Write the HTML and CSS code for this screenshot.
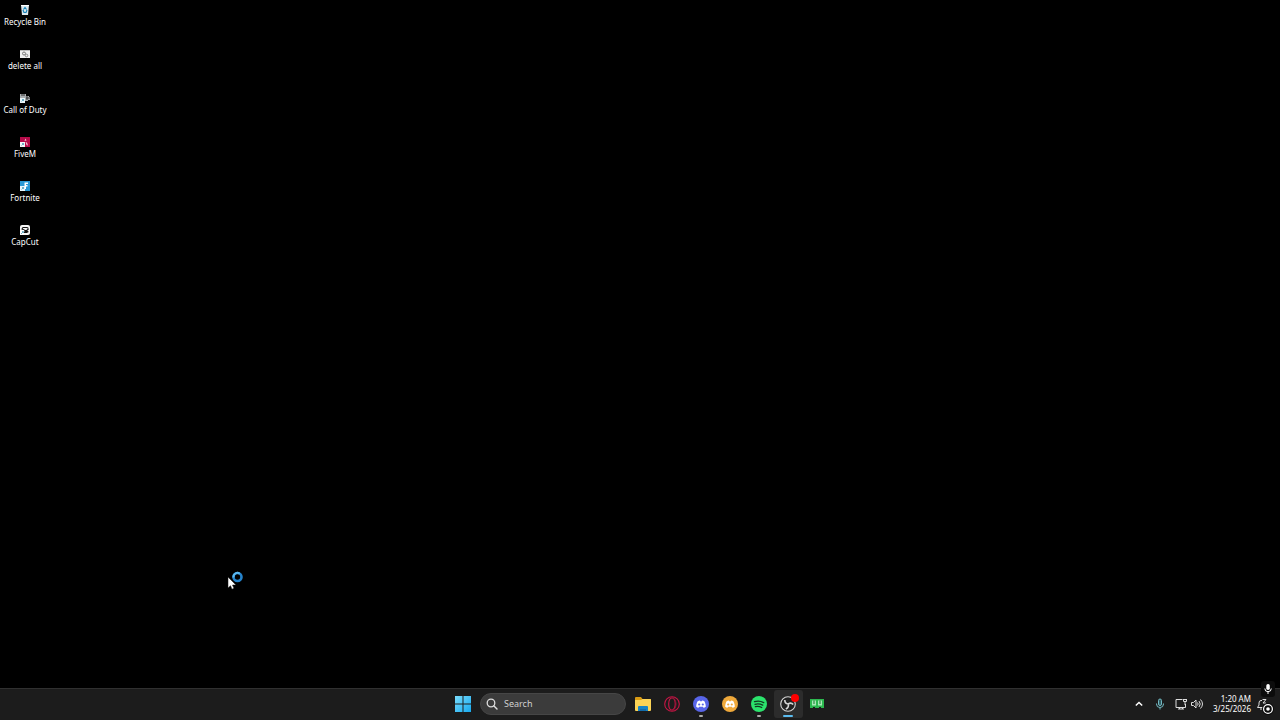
FILE: index.html
```html
<!DOCTYPE html>
<html lang="en">
<head>
  <meta charset="UTF-8">
  <meta name="viewport" content="width=device-width, initial-scale=1.0">
  <title>Desktop</title>
  <link rel="stylesheet" href="styles.css">
</head>
<body>
  <main class="desktop">
    <button class="shortcut">
      <svg viewBox="0 0 12 12"><path d="M2 1h8L9 11H3z" fill="#d9e6eb"/><path d="M2 1h8v1H2z" fill="#fff"/><path d="M4.500 5.500l1.500-2 1.500 2M8 6l-1 2.500H5L4 6" fill="none" stroke="#1683b8" stroke-width="1.200"/></svg>
      <span>Recycle Bin</span>
    </button>
    <button class="shortcut">
      <svg viewBox="0 0 12 12"><path d="M1 2h10v8H1z" fill="#eee"/><path d="M1 2h10v1H1z" fill="#bbb"/><circle cx="5" cy="5.500" r="1.500" fill="none" stroke="#777"/><circle cx="7.500" cy="7.500" r="1.300" fill="none" stroke="#888"/></svg>
      <span>delete all</span>
    </button>
    <button class="shortcut">
      <svg viewBox="0 0 12 12"><path d="M1 2h6v2h3v1h1v3H9v1H1z" fill="#a9adaf"/><path d="M2 3h4M7 6h4M8 4v4" stroke="#333"/><path d="M1 6h5v5H1z" fill="#e9f5f8"/><path d="M2.500 9.500l2-2M3 7.500h1.500V9" fill="none" stroke="#4a9bb8" stroke-width=".8"/></svg>
      <span>Call of Duty</span>
    </button>
    <button class="shortcut">
      <svg viewBox="0 0 12 12"><path d="M1 1h10v10H1z" fill="#b50b49"/><path d="M5.500 5l1-2.500 1 2zM6.500 6l1.500.5 1 3-1.500-.5z" fill="#f3bfd0"/><path d="M1 6h5v5H1z" fill="#f4f6f8"/><path d="M2.500 9.500l2-2M3 7.500h1.500V9" fill="none" stroke="#4a9bb8" stroke-width=".8"/></svg>
      <span>FiveM</span>
    </button>
    <button class="shortcut">
      <svg viewBox="0 0 12 12"><path d="M1 1h10v10H1z" fill="#2898d5"/><path d="M5.500 2.500H9V4H7v1h1.500v1.500H7V9H5.500z" fill="#fff"/><path d="M1 6h5v5H1z" fill="#e8f5fb"/><path d="M2.500 9.500l2-2M3 7.500h1.500V9" fill="none" stroke="#4a9bb8" stroke-width=".8"/></svg>
      <span>Fortnite</span>
    </button>
    <button class="shortcut">
      <svg viewBox="0 0 12 12"><rect x="1" y="1" width="10" height="10" rx="2" fill="#f6f6f6"/><path d="M9.500 4.500L8 3.500H4L3 5l6.500 3M9.500 5L5 8.500h3.500" fill="none" stroke="#111" stroke-width="1.100"/><path d="M1 6h4v5H1z" fill="#fff"/><path d="M2 10l2-2M3 7.500h1.500V9" fill="none" stroke="#4a9bb8" stroke-width=".8"/></svg>
      <span>CapCut</span>
    </button>

    <svg class="pointer" viewBox="0 0 20 20">
      <circle cx="11.500" cy="7" r="4" fill="none" stroke="#2583cb" stroke-width="2.600"/>
      <path d="M7.500 7.500a4 4 0 0 1 6.200-3.900" fill="none" stroke="#5cb8ee" stroke-width="2"/>
      <path d="M2 7v11l2.500-2.300L6 19.200l2-.9-1.500-3.300H10z" fill="#fff" stroke="#111" stroke-width=".5"/>
    </svg>
  </main>

  <footer class="taskbar">
    <div class="taskbar-center">
      <button class="start" aria-label="Start">
        <svg viewBox="0 0 16 16">
          <defs><linearGradient id="win" x2="1" y2="1"><stop stop-color="#79dcfc"/><stop offset="1" stop-color="#17a9ee"/></linearGradient></defs>
          <path d="M0 0h7.500v7.500H0zM8.500 0H16v7.500H8.500zM0 8.500h7.500V16H0zM8.500 8.500H16V16H8.500z" fill="url(#win)"/>
        </svg>
      </button>
      <label class="search">
        <svg viewBox="0 0 12 12"><circle cx="5" cy="5" r="3.800" fill="none" stroke="#ddd" stroke-width="1.300"/><path d="M8 8l3 3" stroke="#ddd" stroke-width="1.400" stroke-linecap="round"/></svg>
        <input type="text" placeholder="Search" aria-label="Search">
      </label>
      <nav class="apps">
        <button class="app" aria-label="File Explorer">
          <svg viewBox="0 0 16 16"><path d="M0 2q0-1 1-1h5l1.500 2H16v4H0z" fill="#d99b14"/><path d="M0 4h6l1.500-1H15q1 0 1 1v10q0 1-1 1H1q-1 0-1-1z" fill="#fbd355"/><path d="M3 15v-4q0-1 1-1h8q1 0 1 1v4z" fill="#1683c6"/><path d="M5 13h6v2H5z" fill="#126bab"/></svg>
        </button>
        <button class="app" aria-label="Opera GX">
          <svg viewBox="0 0 16 16" fill="none" stroke="#c51645"><circle cx="8" cy="8" r="7.300" stroke-width="1.100"/><ellipse cx="8" cy="8" rx="3.300" ry="6.200" stroke-width="1.200"/><path d="M6 1.500c8-1 8 14 0 13" stroke="#8b1435"/></svg>
        </button>
        <button class="app running" aria-label="Discord">
          <svg viewBox="0 0 16 16"><circle cx="8" cy="8" r="8" fill="#5865e8"/><path d="M3.200 10.800c0-2 .5-4 1.400-5.600 1-.6 1.600-.7 2.200-.8l.4.8h1.600l.4-.8c.8.100 1.500.3 2.200.8.900 1.600 1.400 3.600 1.400 5.600-.8.600-1.600.9-2.300 1l-.6-1.100H6.100l-.6 1.100c-.8-.1-1.500-.4-2.300-1z" fill="#fff"/><circle cx="6.200" cy="8.500" r="1.100" fill="#5865e8"/><circle cx="9.800" cy="8.500" r="1.100" fill="#5865e8"/></svg>
        </button>
        <button class="app" aria-label="Discord Canary">
          <svg viewBox="0 0 16 16"><circle cx="8" cy="8" r="8" fill="#efa93b"/><path d="M3.200 10.800c0-2 .5-4 1.400-5.600 1-.6 1.600-.7 2.200-.8l.4.8h1.600l.4-.8c.8.100 1.500.3 2.200.8.900 1.600 1.400 3.600 1.400 5.600-.8.600-1.600.9-2.300 1l-.6-1.100H6.100l-.6 1.100c-.8-.1-1.500-.4-2.300-1z" fill="#fff"/><circle cx="6.200" cy="8.500" r="1.100" fill="#efa93b"/><circle cx="9.800" cy="8.500" r="1.100" fill="#efa93b"/></svg>
        </button>
        <button class="app running" aria-label="Spotify">
          <svg viewBox="0 0 16 16"><circle cx="8" cy="8" r="8" fill="#2be36c"/><path d="M3.500 5.700c3-.9 6.400-.6 9.200.9M4 8.300c2.600-.7 5.300-.4 7.700.8M4.400 10.700c2.200-.5 4.300-.3 6.300.8" fill="none" stroke="#123b20" stroke-width="1.300" stroke-linecap="round"/></svg>
        </button>
        <button class="app active" aria-label="OBS Studio">
          <svg viewBox="0 0 16 16"><circle cx="8" cy="8" r="7.300" fill="#222" stroke="#d5d5d5" stroke-width="1.100"/><path d="M4.800 4c0 2.300 1.200 3.800 3.400 4M8.200 8c1.800-1.300 3.700-1 5 .6M8.200 8c.6 2-.2 4-2.400 5" fill="none" stroke="#d5d5d5" stroke-width="1.600"/></svg>
          <span class="recording"></span>
        </button>
        <button class="app" aria-label="System monitor">
          <svg viewBox="0 0 16 16"><path d="M1 3h14v9h-3v-1h-2v1H6v-1H4v1H1z" fill="#2cb84f"/><path d="M3 4.500h4v5H3zM9 4.500h4v5H9z" fill="#a5e8b4"/><path d="M4.500 4.500h1v3.500h-1zM10.500 4.500h1v3.500h-1z" fill="#17752f"/></svg>
        </button>
      </nav>
    </div>

    <div class="tray">
      <button class="tray-button" aria-label="Show hidden icons"><svg viewBox="0 0 12 12"><path d="M2.800 7.500L6 4.500l3.200 3" fill="none" stroke="#fff" stroke-width="1.500"/></svg></button>
      <button class="tray-button mic" aria-label="Microphone"><svg viewBox="0 0 12 12" fill="none" stroke="#73b9c2"><rect x="4.500" y="1" width="3" height="6.500" rx="1.500" fill="#315b61"/><path d="M2.500 5.500v.5q0 3.500 3.500 3.500T9.500 6v-.5M6 9.500v2"/></svg></button>
      <button class="tray-button quick" aria-label="Network and volume">
        <svg viewBox="0 0 12 12" fill="none" stroke="#ddd"><path d="M7.500 1.500H1v8h9.500V6M3 11h6M4.500 9v2M7.500 9v2"/><path d="M8.500 1v2.500h3V1M8 1.500h4M10 4v3" /></svg>
        <svg viewBox="0 0 12 12" fill="none" stroke="#ddd"><path d="M.5 4.500h2L5 2v8L2.500 7.500h-2z"/><path d="M6.500 4.500q1.300 1.500 0 3M8 3q2.500 3 0 6M9.500 1.500q4 4.500 0 9"/></svg>
      </button>
      <button class="clock"><span>1:20 AM</span><span>3/25/2026</span></button>
      <button class="bell" aria-label="Notifications"><svg viewBox="0 0 12 12" fill="none" stroke="#ddd"><path d="M6 2.500H5Q3 2.500 3 5v2L1.500 9.500H8M4 11h2M6.500 1.500H10L7 5h3"/></svg></button>
    </div>
  </footer>

  <!-- recording status, on top of the taskbar -->
  <div class="overlay">
    <svg viewBox="0 0 16 16"><rect x="1" width="14" height="16" rx="3" fill="#0c0c0c"/><rect x="6.300" y="3" width="3.500" height="6" rx="1.700" fill="#fff"/><path d="M4.800 7.500q0 3.200 3.200 3.200t3.300-3.200M8 10.700V13" fill="none" stroke="#fff"/></svg>
    <svg viewBox="0 0 16 16"><circle cx="8" cy="8" r="6" fill="#0c0c0c"/><circle cx="8" cy="8" r="4.400" fill="none" stroke="#fff" stroke-width="1.200"/><circle cx="8" cy="8" r="1.800" fill="#fff"/></svg>
  </div>
</body>
</html>
```
FILE: styles.css
```css
* {
  box-sizing: border-box;
}

body {
  margin: 0;
  height: 100vh;
  display: flex;
  flex-direction: column;
  overflow: hidden;
  background-color: #000;
  color: #fff;
  font-family: "Noto Sans", sans-serif;
  font-size: 8px;
}

button {
  padding: 0;
  border: none;
  background: none;
  color: inherit;
  font: inherit;
}

svg {
  display: block;
  flex-shrink: 0;
}

.desktop {
  flex: 1;
  display: flex;
  flex-direction: column;
  align-items: flex-start;
  padding-top: 4px;
}

.shortcut {
  width: 50px;
  height: 44px;
  display: flex;
  flex-direction: column;
  align-items: center;
  line-height: 12px;
  white-space: nowrap;
}

.shortcut svg {
  width: 12px;
  height: 12px;
}

.pointer {
  position: absolute;
  left: 226px;
  top: 570px;
  width: 20px;
  height: 20px;
}

.taskbar {
  height: 32px;
  display: grid;
  grid-template-columns: 1fr auto 1fr;
  padding-bottom: 2px;
  background-color: #1c1c1c;
  border-top: 1px solid #303030;
}

.taskbar-center {
  grid-column: 2;
  display: flex;
  align-items: center;
  gap: 2px;
}

.start {
  width: 30px;
  height: 28px;
  display: flex;
  align-items: center;
  justify-content: center;
}

.start svg,
.app svg {
  width: 16px;
  height: 16px;
}

.search {
  width: 146px;
  height: 22px;
  display: flex;
  align-items: center;
  gap: 6px;
  padding: 0 5px;
  border: 1px solid #464646;
  border-radius: 11px;
  background-color: #3b3b3b;
}

.search svg {
  width: 12px;
  height: 12px;
}

.search input {
  flex: 1;
  min-width: 0;
  padding: 0;
  border: none;
  outline: none;
  background: none;
  color: #fff;
  font: 9px "Noto Sans", sans-serif;
}

.search input::placeholder {
  color: #d0d0d0;
}

.apps {
  width: 204px;
  display: grid;
  grid-template-columns: repeat(7, 1fr);
}

.app {
  position: relative;
  height: 28px;
  display: flex;
  align-items: center;
  justify-content: center;
  border-radius: 3px;
}

.app.active {
  background-color: #2c2c2c;
}

/* indicator under open apps */
.running::after,
.active::after {
  content: "";
  position: absolute;
  bottom: 1px;
  width: 4px;
  height: 2px;
  border-radius: 1px;
  background-color: #aaa;
}

.active::after {
  width: 10px;
  background-color: #5bbcf0;
}

.recording {
  position: absolute;
  top: 4px;
  right: 4px;
  width: 8px;
  height: 8px;
  border-radius: 50%;
  background-color: #f00;
}

.tray {
  display: flex;
  align-items: center;
  justify-content: flex-end;
  padding-right: 12px;
}

.tray svg {
  width: 12px;
  height: 12px;
}

.mic {
  margin: 0 9px;
}

.quick {
  display: flex;
  gap: 4px;
}

.clock {
  min-width: 38px;
  display: flex;
  flex-direction: column;
  align-items: flex-end;
  margin: 0 5px 0 10px;
  line-height: 10px;
}

.overlay {
  position: absolute;
  right: 4px;
  bottom: 3px;
  display: flex;
  flex-direction: column;
  gap: 4px;
}

.overlay svg {
  width: 16px;
  height: 16px;
}
```
